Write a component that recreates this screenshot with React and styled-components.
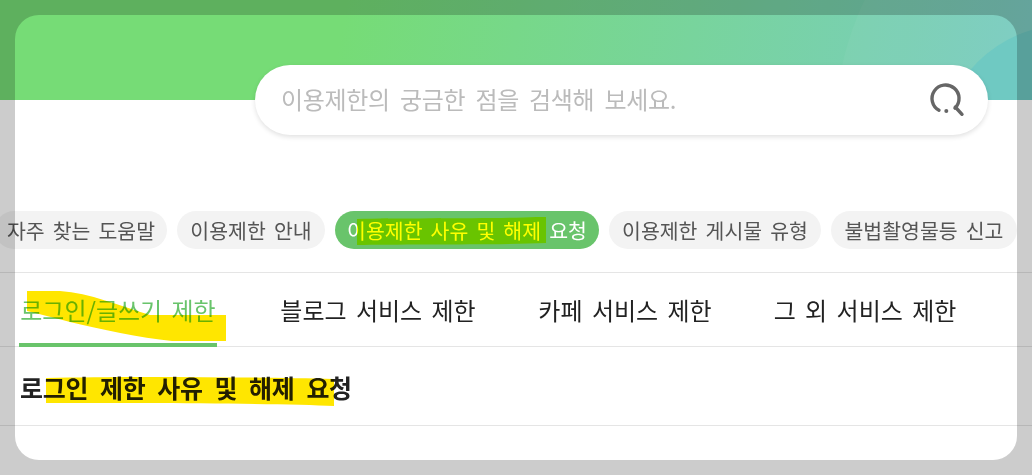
import React from "react";
import styled, { createGlobalStyle } from "styled-components";

const GlobalStyle = createGlobalStyle`
  html, body {
    margin: 0;
    padding: 0;
    background: #fff;
    font-family: "Noto Sans CJK KR", "Noto Sans", sans-serif;
  }
`;

const chips = [
  { label: "자주 찾는 도움말", width: 172 },
  { label: "이용제한 안내", width: 148 },
  { label: "이용제한 사유 및 해제 요청", width: 264, active: true },
  { label: "이용제한 게시물 유형", width: 212 },
  { label: "불법촬영물등 신고", width: 186 },
];

const tabs = [
  { label: "로그인/글쓰기 제한", width: 198, active: true },
  { label: "블로그 서비스 제한", width: 194 },
  { label: "카페 서비스 제한", width: 172 },
  { label: "그 외 서비스 제한", width: 180 },
];

const SearchIcon = () => (
  <svg width="36" height="36" viewBox="0 0 36 36" fill="none">
    <path
      d="M10 28.3 A13.5 13.5 0 1 1 26 26.1"
      stroke="#666"
      strokeWidth="3.4"
      strokeLinecap="round"
    />
    <circle cx="17.3" cy="29" r="2" fill="#666" />
    <path d="M26.3 25 L33 32.3" stroke="#666" strokeWidth="3.4" strokeLinecap="round" />
  </svg>
);

const App = () => {
  return (
    <Page>
      <GlobalStyle />
      <Hero>
        <LightBlob />
        <DarkBlob />
      </Hero>
      <SearchBox>
        <Placeholder>이용제한의 궁금한 점을 검색해 보세요.</Placeholder>
        <SearchIcon />
      </SearchBox>
      <ChipRow>
        {chips.map((chip) => (
          <Chip key={chip.label} $active={chip.active} $width={chip.width}>
            {chip.label}
          </Chip>
        ))}
      </ChipRow>
      <TabRow>
        {tabs.map((tab) => (
          <Tab key={tab.label} $active={tab.active} $width={tab.width}>
            {tab.label}
          </Tab>
        ))}
      </TabRow>
      <TitleRow>로그인 제한 사유 및 해제 요청</TitleRow>

      {/* yellow marker strokes drawn over the capture */}
      <Marker viewBox="0 0 1032 475">
        <path
          fill="#ffe600"
          d="M27 291 L60 291 C90 293 120 306 150 315 L226 315 L226 341 L172 341 C140 338 100 329 70 322 C55 318 40 314 27 311 Z"
        />
        <path
          fill="#ffff00"
          d="M357 219 C400 218 500 219 536 217 L546 217 L546 243 C500 245 400 244 357 245 Z"
        />
        <path
          fill="#ffe600"
          d="M46 378 C120 376 250 377 334 379 L334 406 C280 403 120 403 46 403 Z"
        />
      </Marker>

      <Frame />
    </Page>
  );
};

const Page = styled.div`
  position: relative;
  width: 1032px;
  height: 475px;
  overflow: hidden;
  background: #fff;
`;

const Hero = styled.div`
  position: relative;
  height: 100px;
  overflow: hidden;
  background: linear-gradient(100deg, #76dc76 33%, #7accc3 100%);
`;

const LightBlob = styled.div`
  position: absolute;
  left: 835px;
  top: -170px;
  width: 600px;
  height: 600px;
  border-radius: 50%;
  background: rgba(255, 255, 255, 0.04);
`;

const DarkBlob = styled.div`
  position: absolute;
  left: 939px;
  top: 24px;
  width: 262px;
  height: 262px;
  border-radius: 50%;
  background: #6fc9c2;
`;

const SearchBox = styled.div`
  position: relative;
  display: flex;
  align-items: center;
  justify-content: space-between;
  box-sizing: border-box;
  width: 733px;
  height: 70px;
  margin: -35px 0 0 255px;
  padding: 0 23px 0 26px;
  border-radius: 35px;
  background: #fff;
  box-shadow: 0 2px 5px rgba(0, 0, 0, 0.12);
`;

const Placeholder = styled.span`
  padding-bottom: 3px;
  font-size: 24px;
  letter-spacing: -0.3px;
  word-spacing: 5px;
  color: #bbb;
`;

const ChipRow = styled.div`
  display: flex;
  gap: 10px;
  height: 38px;
  margin: 76px 0 0 -5px;
`;

const Chip = styled.div`
  display: flex;
  flex: none;
  align-items: center;
  justify-content: center;
  box-sizing: border-box;
  width: ${(props) => props.$width}px;
  padding-bottom: 1px;
  border-radius: 19px;
  font-size: 20.5px;
  word-spacing: 3.5px;
  white-space: nowrap;
  color: ${(props) => (props.$active ? "#fff" : "#555")};
  background: ${(props) => (props.$active ? "#69c46b" : "#f3f3f3")};
`;

const TabRow = styled.div`
  display: flex;
  gap: 64px;
  height: 73px;
  margin-top: 23px;
  padding-left: 19px;
  border-top: 1px solid #e5e5e5;
  border-bottom: 1px solid #e5e5e5;
`;

const Tab = styled.div`
  display: flex;
  align-items: center;
  justify-content: center;
  flex: none;
  width: ${(props) => props.$width}px;
  height: 74px;
  box-sizing: border-box;
  padding-top: 3px;
  border-bottom: 4px solid ${(props) => (props.$active ? "#69c46b" : "transparent")};
  font-size: 24px;
  word-spacing: 4px;
  white-space: nowrap;
  color: ${(props) => (props.$active ? "#69c46b" : "#222")};
`;

const TitleRow = styled.div`
  display: flex;
  align-items: center;
  height: 79px;
  box-sizing: border-box;
  padding: 2px 0 0 20px;
  border-bottom: 1px solid #e5e5e5;
  font-size: 25px;
  font-weight: 700;
  letter-spacing: -0.3px;
  word-spacing: 6.5px;
  color: #222;
`;

const Marker = styled.svg`
  position: absolute;
  left: 0;
  top: 0;
  width: 1032px;
  height: 475px;
  mix-blend-mode: multiply;
  pointer-events: none;
`;

const Frame = styled.div`
  position: absolute;
  left: 15px;
  top: 15px;
  width: 1002px;
  height: 445px;
  border-radius: 24px;
  box-shadow: 0 0 0 1200px rgba(0, 0, 0, 0.2);
  pointer-events: none;
`;

export default App;
